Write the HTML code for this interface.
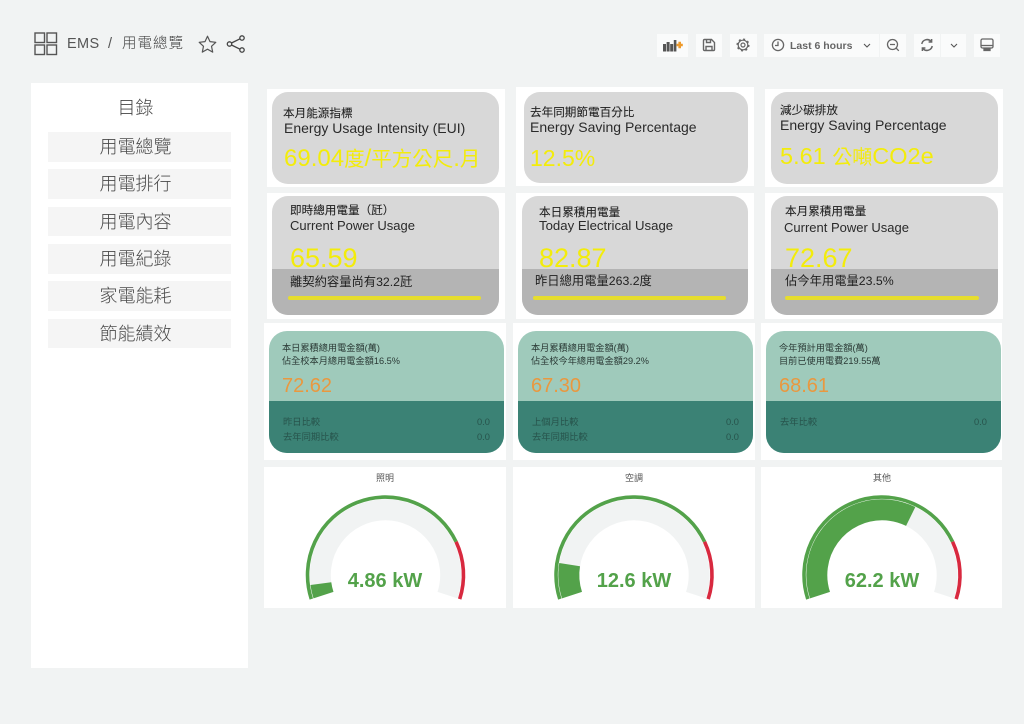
<!DOCTYPE html>
<html lang="zh-Hant"><head><meta charset="utf-8"><title>EMS</title>
<style>
html,body{margin:0;padding:0}
body{width:1024px;height:724px;position:relative;overflow:hidden;background:#f1f3f3;font-family:"Liberation Sans","Noto Sans CJK TC",sans-serif;color:#222}
div,span.a,svg{position:absolute}
span.a{white-space:nowrap;line-height:20px}
.w{background:#fff}
.g{background:#d8d8d8;border-radius:16px;overflow:hidden}
.d{position:absolute;left:0;right:0;bottom:0;background:#b4b4b4}
.t{font-size:11.6px;color:#1f1f1f;-webkit-text-stroke:.08px #1f1f1f;margin-top:1px}
.e{font-size:13.2px;color:#2a2a2a}
.e1{font-size:14px;color:#2a2a2a}
.e2{font-size:13px;color:#2a2a2a}
.y{color:#f3ec0b}
.cj{font-size:20.5px}
.bar{background:#e6dd2e;height:4px;border-radius:2px}
.k{font-size:12.3px;color:#1f1f1f}
.c{background:#9fcabb;border-radius:18px;overflow:hidden}
.c .d{background:#3b8275}
.s{font-size:9.2px;color:#2b3a36}
.n{font-size:20px;color:#e9983f;margin-top:1px}
.m{font-size:9.3px;color:#27544c}
.item{left:48px;width:175px;padding-right:8px;background:#f5f5f5;text-align:center;font-size:18px;line-height:31px;color:#4a4a4a;font-weight:300}
.b{background:#fafbfb;top:34px;height:23px}
.gt{font-size:9px;color:#555;text-align:center;width:242px;left:0;top:1px}
.gv{font-size:20px;font-weight:bold;color:#53a24a;text-align:center;width:242px;left:0;top:104px}
</style></head><body>

<!-- header -->
<svg style="left:34px;top:32px" width="24" height="24" viewBox="0 0 24 24" fill="none" stroke="#555" stroke-width="1.4"><rect x="1" y="1" width="9.5" height="9.5"/><rect x="13" y="1" width="9.5" height="9.5"/><rect x="1" y="13" width="9.5" height="9.5"/><rect x="13" y="13" width="9.5" height="9.5"/></svg>
<span class="a" style="left:67px;top:34px;font-size:14.5px;color:#555;letter-spacing:.35px">EMS</span>
<span class="a" style="left:108px;top:34px;font-size:14.5px;color:#555">/</span>
<span class="a" style="left:122px;top:34px;font-size:14.5px;color:#444;letter-spacing:1px;font-weight:300">用電總覽</span>
<svg style="left:198px;top:35px" width="19" height="18" viewBox="0 0 19 18" fill="none" stroke="#555" stroke-width="1.2" stroke-linejoin="round"><path d="M9.5 1.2l2.5 5.4 5.8.7-4.3 4 1.2 5.8-5.2-2.9-5.2 2.9 1.2-5.8-4.3-4 5.8-.7z"/></svg>
<svg style="left:226px;top:35px" width="20" height="18" viewBox="0 0 20 18" fill="none" stroke="#444" stroke-width="1.3"><circle cx="3.5" cy="9" r="2.2"/><circle cx="16" cy="3" r="2.2"/><circle cx="16" cy="15" r="2.2"/><path d="M5.5 8l8.5-4.2M5.5 10l8.5 4.2"/></svg>

<!-- toolbar -->
<div class="b" style="left:657px;width:31px"></div>
<svg style="left:662px;top:38px" width="22" height="15" viewBox="0 0 22 15"><g fill="#555"><rect x="1" y="6" width="3" height="7.5"/><rect x="4.6" y="4" width="3" height="9.5"/><rect x="8.2" y="6" width="3" height="7.5"/><rect x="11.8" y="2" width="2.6" height="11.5"/></g><path d="M14.6 7h6.2M17.7 3.8v6.4" stroke="#ee9a2b" stroke-width="2.6"/></svg>
<div class="b" style="left:696px;width:26px"></div>
<svg style="left:702px;top:38px" width="14" height="14" viewBox="0 0 14 14" fill="none" stroke="#666" stroke-width="1.4"><path d="M2.5 1.5h7l3 3v7a1 1 0 0 1-1 1h-9a1 1 0 0 1-1-1v-9a1 1 0 0 1 1-1z"/><path d="M4.5 1.5v3h4v-3M4 12.5v-4h6v4"/></svg>
<div class="b" style="left:730px;width:27px"></div>
<svg style="left:736px;top:38px" width="14" height="14" viewBox="0 0 14 14" fill="none" stroke="#666"><circle cx="7" cy="7" r="2" stroke-width="1.2"/><circle cx="7" cy="7" r="4.8" stroke-width="1.2"/><circle cx="7" cy="7" r="5.8" stroke-width="1.5" stroke-dasharray="2 2.55"/></svg>
<div class="b" style="left:764px;width:115px"></div>
<svg style="left:771px;top:38px" width="14" height="14" viewBox="0 0 14 14" fill="none" stroke="#666" stroke-width="1.3"><circle cx="7" cy="7" r="5.6"/><path d="M7 3.5V7.5H4"/></svg>
<span class="a" style="left:790px;top:36px;font-size:10.5px;font-weight:bold;color:#666">Last 6 hours</span>
<svg style="left:863px;top:43px" width="8" height="5" viewBox="0 0 8 5" fill="none" stroke="#555" stroke-width="1.1"><path d="M1 1l3 3 3-3"/></svg>
<div class="b" style="left:880px;width:26px"></div>
<svg style="left:886px;top:38px" width="14" height="14" viewBox="0 0 14 14" fill="none" stroke="#666" stroke-width="1.3"><circle cx="6.5" cy="6.5" r="5"/><path d="M4 6.5h5M10.2 10.2l2.6 2.6"/></svg>
<div class="b" style="left:914px;width:26px"></div>
<svg style="left:920px;top:38px" width="14" height="14" viewBox="0 0 14 14" fill="none" stroke="#666" stroke-width="1.5"><path d="M1.8 6a5.3 5.3 0 0 1 9.2-2.6M12.2 8a5.3 5.3 0 0 1-9.2 2.6"/><path d="M11.6 1v3h-3M2.4 13v-3h3"/></svg>
<div class="b" style="left:941px;width:25px"></div>
<svg style="left:950px;top:43px" width="8" height="5" viewBox="0 0 8 5" fill="none" stroke="#555" stroke-width="1.1"><path d="M1 1l3 3 3-3"/></svg>
<div class="b" style="left:974px;width:26px"></div>
<svg style="left:980px;top:38px" width="14" height="14" viewBox="0 0 14 14" fill="none" stroke="#666" stroke-width="1.3"><rect x="1" y="1" width="12" height="9" rx="1.5"/><path d="M1 7.5h12" /><path d="M4 10v2.5h6V10" fill="#666"/></svg>

<!-- sidebar -->
<div class="w" style="left:31px;top:83px;width:217px;height:585px"></div>
<span class="a" style="left:31px;width:209px;text-align:center;top:98px;font-size:18px;color:#444;font-weight:300">目錄</span>
<div class="item" style="top:132px;height:30px">用電總覽</div>
<div class="item" style="top:169px;height:30px">用電排行</div>
<div class="item" style="top:207px;height:29px">用電內容</div>
<div class="item" style="top:244px;height:30px">用電紀錄</div>
<div class="item" style="top:281px;height:30px">家電能耗</div>
<div class="item" style="top:319px;height:29px">節能績效</div>

<!-- row 1 -->
<div class="w" style="left:267px;top:89px;width:238px;height:98px"></div>
<div class="w" style="left:516px;top:87px;width:238px;height:99px"></div>
<div class="w" style="left:765px;top:89px;width:238px;height:98px"></div>
<div class="g" style="left:272px;top:92px;width:227px;height:92px"></div>
<div class="g" style="left:524px;top:92px;width:224px;height:91px"></div>
<div class="g" style="left:771px;top:92px;width:227px;height:92px"></div>
<span class="a t" style="left:283px;top:103px">本月能源指標</span>
<span class="a e1" style="left:284px;top:118px">Energy Usage Intensity (EUI)</span>
<span class="a y" style="left:284px;top:149px;font-size:24px">69.04<span class="cj">度</span>/<span class="cj">平方公尺</span>.<span class="cj">月</span></span>
<span class="a t" style="left:530px;top:102px">去年同期節電百分比</span>
<span class="a e1" style="left:530px;top:117px">Energy Saving Percentage</span>
<span class="a y" style="left:530px;top:148px;font-size:23px">12.5%</span>
<span class="a t" style="left:780px;top:100px">減少碳排放</span>
<span class="a e1" style="left:780px;top:115px">Energy Saving Percentage</span>
<span class="a y" style="left:780px;top:146px;font-size:23.5px">5.61 <span style="font-size:20px">公噸</span>CO2e</span>

<!-- row 2 -->
<div class="w" style="left:267px;top:193px;width:238px;height:126px"></div>
<div class="w" style="left:516px;top:193px;width:238px;height:126px"></div>
<div class="w" style="left:765px;top:193px;width:238px;height:126px"></div>
<div class="g" style="left:272px;top:196px;width:227px;height:119px"><div class="d" style="height:46px"></div></div>
<div class="g" style="left:522px;top:196px;width:226px;height:119px"><div class="d" style="height:46px"></div></div>
<div class="g" style="left:771px;top:196px;width:227px;height:119px"><div class="d" style="height:46px"></div></div>
<span class="a t" style="left:290px;top:200px">即時總用電量（瓩）</span>
<span class="a e2" style="left:290px;top:216px">Current Power Usage</span>
<span class="a y" style="left:290px;top:248px;font-size:27px">65.59</span>
<span class="a k" style="left:290px;top:272px">離契約容量尚有32.2瓩</span>
<div class="bar" style="left:288px;top:296px;width:193px"></div>
<span class="a t" style="left:539px;top:202px">本日累積用電量</span>
<span class="a e" style="left:539px;top:216px">Today Electrical Usage</span>
<span class="a y" style="left:539px;top:248px;font-size:27px">82.87</span>
<span class="a k" style="left:535px;top:271px">昨日總用電量263.2度</span>
<div class="bar" style="left:533px;top:296px;width:193px"></div>
<span class="a t" style="left:785px;top:201px">本月累積用電量</span>
<span class="a e2" style="left:784px;top:218px">Current Power Usage</span>
<span class="a y" style="left:785px;top:248px;font-size:27px">72.67</span>
<span class="a k" style="left:785px;top:271px">佔今年用電量23.5%</span>
<div class="bar" style="left:785px;top:296px;width:194px"></div>

<!-- row 3 -->
<div class="w" style="left:264px;top:323px;width:242px;height:137px"></div>
<div class="w" style="left:513px;top:323px;width:242px;height:137px"></div>
<div class="w" style="left:761px;top:323px;width:241px;height:137px"></div>
<div class="c" style="left:269px;top:331px;width:235px;height:122px"><div class="d" style="height:52px"></div></div>
<div class="c" style="left:518px;top:331px;width:235px;height:122px"><div class="d" style="height:52px"></div></div>
<div class="c" style="left:766px;top:331px;width:235px;height:122px"><div class="d" style="height:52px"></div></div>

<span class="a s" style="left:282px;top:338px">本日累積總用電金額(萬)</span>
<span class="a s" style="left:282px;top:351px">佔全校本月總用電金額16.5%</span>
<span class="a n" style="left:282px;top:375px">72.62</span>
<span class="a m" style="left:283px;top:412px">昨日比較</span><span class="a m" style="left:477px;top:412px">0.0</span>
<span class="a m" style="left:283px;top:427px">去年同期比較</span><span class="a m" style="left:477px;top:427px">0.0</span>

<span class="a s" style="left:531px;top:338px">本月累積總用電金額(萬)</span>
<span class="a s" style="left:531px;top:351px">佔全校今年總用電金額29.2%</span>
<span class="a n" style="left:531px;top:375px">67.30</span>
<span class="a m" style="left:532px;top:412px">上個月比較</span><span class="a m" style="left:726px;top:412px">0.0</span>
<span class="a m" style="left:532px;top:427px">去年同期比較</span><span class="a m" style="left:726px;top:427px">0.0</span>

<span class="a s" style="left:779px;top:338px">今年預計用電金額(萬)</span>
<span class="a s" style="left:779px;top:351px">目前已使用電費219.55萬</span>
<span class="a n" style="left:779px;top:375px">68.61</span>
<span class="a m" style="left:780px;top:412px">去年比較</span><span class="a m" style="left:974px;top:412px">0.0</span>

<!-- row 4 gauges -->
<div class="w" style="left:264px;top:467px;width:242px;height:141px"><span class="a gt">照明</span></div>
<div class="w" style="left:513px;top:467px;width:242px;height:141px"><span class="a gt">空調</span></div>
<div class="w" style="left:761px;top:467px;width:241px;height:141px"><span class="a gt">其他</span></div>
<svg style="left:0;top:0" width="1024" height="724" fill="none">
<g transform="translate(385.5 575)">
<path d="M-62.01 20.15A65.2 65.2 0 1 1 62.01 20.15" stroke="#f1f3f3" stroke-width="21"/>
<path d="M-62.01 20.15A65.2 65.2 0 1 1 62.01 20.15" stroke="#53a24a" stroke-width="21" pathLength="100" stroke-dasharray="4.86 200"/>
<path d="M-74.18 24.1A78 78 0 0 1 70.57 -33.21" stroke="#53a24a" stroke-width="3.6"/>
<path d="M70.57 -33.21A78 78 0 0 1 74.18 24.1" stroke="#d8293f" stroke-width="3.6"/>
</g>
<g transform="translate(634 575)">
<path d="M-62.01 20.15A65.2 65.2 0 1 1 62.01 20.15" stroke="#f1f3f3" stroke-width="21"/>
<path d="M-62.01 20.15A65.2 65.2 0 1 1 62.01 20.15" stroke="#53a24a" stroke-width="21" pathLength="100" stroke-dasharray="12.6 200"/>
<path d="M-74.18 24.1A78 78 0 0 1 70.57 -33.21" stroke="#53a24a" stroke-width="3.6"/>
<path d="M70.57 -33.21A78 78 0 0 1 74.18 24.1" stroke="#d8293f" stroke-width="3.6"/>
</g>
<g transform="translate(882 575)">
<path d="M-62.01 20.15A65.2 65.2 0 1 1 62.01 20.15" stroke="#f1f3f3" stroke-width="21"/>
<path d="M-62.01 20.15A65.2 65.2 0 1 1 62.01 20.15" stroke="#53a24a" stroke-width="21" pathLength="100" stroke-dasharray="62.2 200"/>
<path d="M-74.18 24.1A78 78 0 0 1 70.57 -33.21" stroke="#53a24a" stroke-width="3.6"/>
<path d="M70.57 -33.21A78 78 0 0 1 74.18 24.1" stroke="#d8293f" stroke-width="3.6"/>
</g>
</svg>
<span class="a gv" style="left:264px;top:571px">4.86 kW</span>
<span class="a gv" style="left:513px;top:571px">12.6 kW</span>
<span class="a gv" style="left:761px;top:571px">62.2 kW</span>
</body></html>
